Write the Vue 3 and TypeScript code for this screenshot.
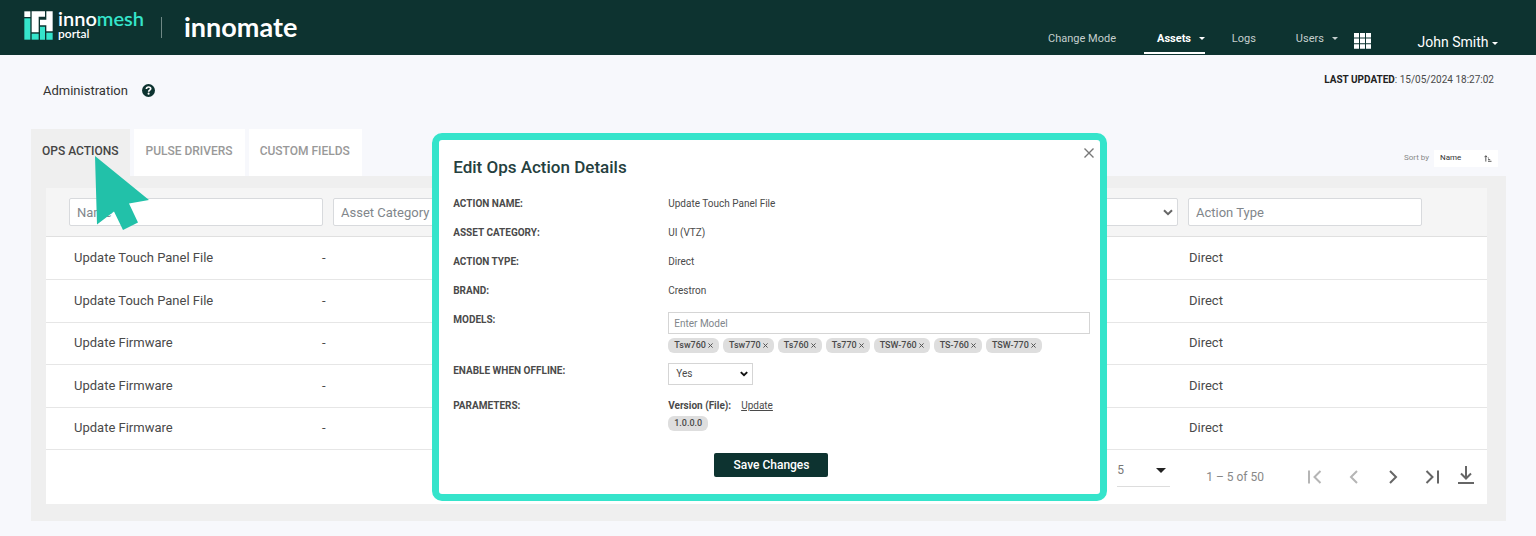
<script setup lang="ts">
import { ref } from 'vue'

interface ActionRow {
  name: string
  category: string
  type: string
}

const rows: ActionRow[] = [
  { name: 'Update Touch Panel File', category: '-', type: 'Direct' },
  { name: 'Update Touch Panel File', category: '-', type: 'Direct' },
  { name: 'Update Firmware', category: '-', type: 'Direct' },
  { name: 'Update Firmware', category: '-', type: 'Direct' },
  { name: 'Update Firmware', category: '-', type: 'Direct' },
]

const tabs = ['OPS ACTIONS', 'PULSE DRIVERS', 'CUSTOM FIELDS']
const activeTab = ref('OPS ACTIONS')

const details = [
  { label: 'ACTION NAME:', value: 'Update Touch Panel File' },
  { label: 'ASSET CATEGORY:', value: 'UI (VTZ)' },
  { label: 'ACTION TYPE:', value: 'Direct' },
  { label: 'BRAND:', value: 'Crestron' },
]

const models = ref(['Tsw760', 'Tsw770', 'Ts760', 'Ts770', 'TSW-760', 'TS-760', 'TSW-770'])
const offline = ref('Yes')
const dialogOpen = ref(true)

function removeModel(model: string) {
  models.value = models.value.filter((m) => m !== model)
}
</script>

<template>
  <div class="page">
    <header class="topbar">
      <a class="brand" href="#">
        <svg class="brand-mark" viewBox="0 0 87 87" aria-hidden="true">
          <g fill="#fff">
            <path d="M1 1h18v17H1z" />
            <path d="M23 1h40v16H44v47H23z" />
            <path d="M67 1h19v60H67V43H48V26h19z" />
          </g>
          <g fill="#35e4cb">
            <path d="M1 22h18v64H1z" />
            <path d="M23 68h21v18H23z" />
            <path d="M48 47h15v39H48zM67 65h19v21H67z" />
          </g>
        </svg>
        <span class="brand-text">
          <span class="brand-name">inno<span class="accent">mesh</span></span>
          <span class="brand-sub">portal</span>
        </span>
      </a>
      <span class="divider"></span>
      <span class="product">innomate</span>
      <nav class="nav">
        <a class="nav-mode" href="#">Change Mode</a>
        <a class="nav-assets active" href="#">Assets <i class="caret"></i></a>
        <a class="nav-logs" href="#">Logs</a>
        <a class="nav-users" href="#">Users <i class="caret"></i></a>
        <button class="apps" type="button" aria-label="Apps">
          <svg viewBox="0 0 17 16" width="17" height="16" fill="#fff" aria-hidden="true">
            <path d="M0 0h5v4.600H0zM6 0h5v4.600H6zM12 0h5v4.600h-5zM0 5.600h5v4.600H0zM6 5.600h5v4.600H6zM12 5.600h5v4.600h-5zM0 11.200h5v4.600H0zM6 11.200h5v4.600H6zM12 11.200h5v4.600h-5z" />
          </svg>
        </button>
        <button class="user" type="button">John Smith <i class="caret"></i></button>
      </nav>
    </header>

    <main class="content">
      <div class="heading">
        <h1>Administration</h1>
        <button class="help" type="button" aria-label="Help">
          <svg viewBox="0 0 16 16" width="13" height="13" aria-hidden="true">
            <circle cx="8" cy="8" r="8" fill="#0d3330" />
            <path d="M5.400 6.200c.1-1.600 1.200-2.500 2.700-2.500 1.500 0 2.600.9 2.600 2.200 0 1.700-2.500 1.700-2.500 3.500" fill="none" stroke="#fff" stroke-width="2.100" />
            <circle cx="8.100" cy="11.900" r="1.300" fill="#fff" />
          </svg>
        </button>
        <p class="updated"><strong>LAST UPDATED</strong>: 15/05/2024 18:27:02</p>
      </div>

      <div class="toolbar">
        <div class="tabs" role="tablist">
          <button
            v-for="tab in tabs"
            :key="tab"
            type="button"
            role="tab"
            class="tab"
            :class="{ selected: tab === activeTab }"
            :aria-selected="tab === activeTab"
            @click="activeTab = tab"
          >{{ tab }}</button>
        </div>
        <div class="sort">
          <label for="sort">Sort by</label>
          <div class="sort-box">
            <select id="sort"><option>Name</option></select>
            <svg viewBox="0 0 9 8" width="8" height="7" fill="none" stroke="#444" stroke-width="1" aria-hidden="true">
              <path d="M2 7.500V1M.5 2.500 2 .8l1.500 1.700M4.500 3.500h1M4.500 5.300h2.500M4.500 7.200h4" />
            </svg>
          </div>
        </div>
        <svg class="pointer" viewBox="0 0 54 74" width="54" height="74" aria-hidden="true">
          <path d="M0 0 54 44 34 47.500 43 66.500 28 74 19 55.500 2 68.500z" fill="#22c1a9" />
        </svg>
      </div>

      <section class="panel">
        <div class="card">
          <form class="filters" @submit.prevent>
            <input class="f-name" placeholder="Name" aria-label="Name" />
            <input class="f-wide" placeholder="Asset Category" aria-label="Asset Category" />
            <div class="f-wide f-select">
              <select aria-label="Brand"><option></option></select>
              <svg viewBox="0 0 10 7" width="10" height="7" aria-hidden="true">
                <path d="M1 1.200 5 5.200 9 1.200" fill="none" stroke="#666" stroke-width="2" />
              </svg>
            </div>
            <input class="f-type" placeholder="Action Type" aria-label="Action Type" />
          </form>
          <table class="grid">
            <colgroup>
              <col class="c-name" />
              <col />
              <col class="c-type" />
            </colgroup>
            <tbody>
              <tr v-for="(row, i) in rows" :key="i">
                <td>{{ row.name }}</td>
                <td>{{ row.category }}</td>
                <td>{{ row.type }}</td>
              </tr>
            </tbody>
          </table>
          <div class="pager">
            <div class="page-size">
              <select aria-label="Rows"><option>5</option></select>
              <i class="caret"></i>
            </div>
            <span class="range">1 – 5 of 50</span>
            <button class="off" type="button" aria-label="First page" disabled>
              <svg viewBox="0 0 16 16" width="16" height="16"><path d="M2 1.500v13M13.500 2 7.500 8l6 6" /></svg>
            </button>
            <button class="off" type="button" aria-label="Previous page" disabled>
              <svg viewBox="0 0 16 16" width="16" height="16"><path d="M11 2 5 8l6 6" /></svg>
            </button>
            <button type="button" aria-label="Next page">
              <svg viewBox="0 0 16 16" width="16" height="16"><path d="M5 2l6 6-6 6" /></svg>
            </button>
            <button type="button" aria-label="Last page">
              <svg viewBox="0 0 16 16" width="16" height="16"><path d="M2.500 2l6 6-6 6M14 1.500v13" /></svg>
            </button>
            <button class="download" type="button" aria-label="Download">
              <svg viewBox="0 0 16 20" width="16" height="20"><path d="M8 1v12M3 8.500l5 5 5-5M0 18h16" /></svg>
            </button>
          </div>
        </div>
      </section>
    </main>

    <div v-if="dialogOpen" class="overlay">
      <section class="dialog" role="dialog" aria-labelledby="dialog-title">
        <div class="dialog-head">
          <h2 id="dialog-title">Edit Ops Action Details</h2>
          <button class="close" type="button" aria-label="Close" @click="dialogOpen = false">
            <svg viewBox="0 0 10 10" width="10" height="10"><path d="M.5.5l9 9M9.500.5l-9 9" fill="none" stroke="#777" stroke-width="1.400" /></svg>
          </button>
        </div>
        <form @submit.prevent>
          <div v-for="d in details" :key="d.label" class="line">
            <span class="label">{{ d.label }}</span>
            <span class="value">{{ d.value }}</span>
          </div>
          <div class="line models">
            <label class="label" for="model">MODELS:</label>
            <div class="value">
              <input id="model" class="model-input" placeholder="Enter Model" />
              <div class="chips">
                <span v-for="m in models" :key="m" class="chip">
                  {{ m }}
                  <button type="button" :aria-label="'Remove ' + m" @click="removeModel(m)">
                    <svg viewBox="0 0 6 6" width="5" height="5"><path d="M.5.5l5 5M5.500.5l-5 5" fill="none" stroke="#555" stroke-width="1.200" /></svg>
                  </button>
                </span>
              </div>
            </div>
          </div>
          <div class="line offline">
            <label class="label" for="offline">ENABLE WHEN OFFLINE:</label>
            <div class="value">
              <div class="yes-box">
                <select id="offline" v-model="offline"><option>Yes</option><option>No</option></select>
                <svg viewBox="0 0 10 7" width="8" height="6" aria-hidden="true">
                  <path d="M1 1.200 5 5 9 1.200" fill="none" stroke="#111" stroke-width="2.400" />
                </svg>
              </div>
            </div>
          </div>
          <div class="line params">
            <span class="label">PARAMETERS:</span>
            <div class="value">
              <div><strong>Version (File):</strong><a href="#">Update</a></div>
              <span class="chip">1.0.0.0</span>
            </div>
          </div>
          <div class="actions">
            <button class="save" type="submit">Save Changes</button>
          </div>
        </form>
      </section>
    </div>
  </div>
</template>

<style>
body {
  margin: 0;
  background: #f7f8fc;
}
</style>

<style scoped>
.page {
  position: relative;
  min-height: 100vh;
  background: #f7f8fc;
  color: #4a4a4a;
  font: 13px/16px Roboto, "Liberation Sans", sans-serif;
}
.page *,
.page *::before {
  box-sizing: border-box;
}
button,
input,
select {
  font: inherit;
  color: inherit;
  margin: 0;
}
button {
  border: 0;
  padding: 0;
  background: none;
  cursor: pointer;
}
select {
  appearance: none;
  border: 0;
  background: none;
  border-radius: 0;
  outline: 0;
}
svg {
  display: block;
}
.caret {
  display: inline-block;
  border: 3px solid transparent;
  border-top-color: currentColor;
  border-bottom: 0;
}

/* Top bar */
.topbar {
  display: flex;
  align-items: center;
  height: 55px;
  padding: 0 38px 0 24px;
  background: #0d3330;
  color: #fff;
}
.brand {
  display: flex;
  align-items: center;
  gap: 5px;
  padding-bottom: 4px;
  color: #fff;
  text-decoration: none;
}
.brand-mark {
  width: 29px;
  height: 29px;
}
.brand-text {
  display: flex;
  flex-direction: column;
  padding-bottom: 3px;
  font-family: Lato, sans-serif;
  font-weight: 600;
}
.brand-name {
  font-size: 20px;
  line-height: 20px;
}
.accent {
  color: #35e4cb;
}
.brand-sub {
  font-size: 12px;
  line-height: 12px;
}
.divider {
  width: 1px;
  height: 21px;
  margin: 0 22px 0 17px;
  background: #6f8885;
}
.product {
  padding-bottom: 2px;
  font: 700 27px/30px Lato, sans-serif;
}
.nav {
  display: flex;
  align-items: flex-end;
  height: 55px;
  margin-left: auto;
  font-size: 11px;
}
.nav a {
  height: 31px;
  line-height: 32px;
  margin-bottom: 1px;
  color: #c5cfce;
  text-decoration: none;
  white-space: nowrap;
}
.nav .caret {
  margin-left: 5px;
  vertical-align: 2px;
}
.nav .nav-assets {
  margin: 0 27px 1px 28px;
  padding-left: 13px;
  border-bottom: 2px solid #fff;
  color: #fff;
  font-weight: 700;
}
.nav .nav-users {
  margin-left: 40px;
}
.apps {
  height: 16px;
  margin: 0 0 6px 16px;
}
.user {
  height: 26px;
  margin-left: 47px;
  font-size: 14px;
  white-space: nowrap;
}
.nav .user .caret {
  margin-left: 0;
}

/* Page heading */
.content {
  padding: 0 30px 15px 31px;
}
.heading {
  display: flex;
  align-items: center;
  height: 74px;
  padding: 0 12px 3px;
}
h1 {
  margin: 0;
  font-size: 13px;
  font-weight: 400;
  color: #333;
}
.help {
  margin-left: 14px;
}
.updated {
  margin: 0 0 22px auto;
  font-size: 10px;
}
.updated strong {
  font-weight: 700;
  color: #222;
}

/* Tabs and sort */
.toolbar {
  position: relative;
  display: flex;
  justify-content: space-between;
}
.tabs {
  display: flex;
  gap: 4px;
}
.tab {
  height: 47px;
  padding: 0 12px 3px 11px;
  background: #fff;
  color: #999;
  font-size: 12px;
  font-weight: 500;
}
.tab.selected {
  background: #efefef;
  color: #444;
}
.sort {
  display: flex;
  align-items: center;
  gap: 5px;
  padding: 11px 8px 0 0;
  font-size: 8px;
  color: #888;
}
.sort-box {
  display: flex;
  align-items: center;
  width: 64px;
  height: 17px;
  padding: 0 6px;
  background: #fff;
  color: #333;
}
.sort-box select {
  flex: 1;
  min-width: 0;
  padding: 0;
}
.pointer {
  position: absolute;
  left: 64px;
  top: 27px;
  z-index: 2;
}

/* Table panel */
.panel {
  padding: 12px 19px 17px 15px;
  background: #efefef;
}
.card {
  background: #fff;
}
.filters {
  display: flex;
  gap: 10px;
  height: 49px;
  padding: 10px 65px 0 23px;
  background: #f5f5f5;
  border-bottom: 1px solid #e0e0e0;
}
.filters input,
.f-select {
  min-width: 0;
  height: 28px;
  padding: 0 7px;
  border: 1px solid #d8dadd;
  border-radius: 2px;
  background: #fff;
}
input::placeholder {
  color: #81868b;
  opacity: 1;
}
.f-name {
  width: 254px;
}
.f-wide {
  flex: 1;
}
.f-type {
  width: 234px;
}
.f-select {
  display: flex;
  align-items: center;
  padding: 0 4px;
}
.f-select select {
  flex: 1;
}
.grid {
  width: 100%;
  table-layout: fixed;
  border-collapse: collapse;
}
.c-name {
  width: 276px;
}
.c-type {
  width: 298px;
}
.grid td {
  height: 42px;
  padding: 0;
  border-bottom: 1px solid #e6e6e6;
}
.grid tr:nth-child(even) td {
  height: 43px;
}
.grid td:first-child {
  padding-left: 28px;
}
.pager {
  display: flex;
  align-items: center;
  justify-content: flex-end;
  height: 54px;
  padding: 0 13px 0 0;
  color: #777;
}
.page-size {
  display: flex;
  align-items: center;
  width: 53px;
  height: 32px;
  margin: 0 36px 12px 0;
  padding: 0 4px 0 0;
  border-bottom: 1px solid #ddd;
  font-size: 12px;
}
.page-size select {
  flex: 1;
  min-width: 0;
  padding: 0;
}
.page-size .caret {
  border-width: 5px 5px 0;
  color: #222;
}
.range {
  margin-right: 43px;
  font-size: 12px;
  color: #888;
}
.pager button {
  margin-right: 23px;
}
.pager button.download {
  margin: 0 0 4px -5px;
}
.pager svg {
  fill: none;
  stroke: #666;
  stroke-width: 2;
}
.pager .off svg {
  stroke: #b5b5b5;
}

/* Dialog */
.overlay {
  position: absolute;
  inset: 0;
  z-index: 3;
  display: flex;
  justify-content: center;
  align-items: flex-start;
  padding: 133px 0 0 3px;
}
.dialog {
  width: 44%;
  min-width: 640px;
  padding: 8px 10px 17px 14px;
  border: 7px solid #35e4cb;
  border-radius: 10px;
  background: #fff;
}
.dialog-head {
  display: flex;
  justify-content: space-between;
  align-items: flex-start;
  height: 46px;
}
h2 {
  margin: 0;
  padding-top: 8px;
  font-size: 17px;
  line-height: 22px;
  font-weight: 500;
  color: #25403e;
}
.close {
  margin-right: -4px;
}
.line {
  display: flex;
  min-height: 29px;
  font-size: 10px;
  line-height: 20px;
}
.label {
  width: 215px;
  font-weight: 700;
}
.value {
  flex: 1;
}
.models .value {
  padding-top: 2px;
}
.model-input {
  display: block;
  width: 100%;
  height: 22px;
  padding: 0 5px;
  border: 1px solid #d5d5d5;
}
.chips {
  display: flex;
  gap: 4px;
  padding-top: 4px;
}
.chip {
  display: inline-flex;
  align-items: center;
  gap: 2px;
  height: 15px;
  padding: 0 6px;
  border-radius: 6px;
  background: #dedede;
  font-size: 9px;
  line-height: 15px;
  font-weight: 500;
}
.models {
  min-height: 51px;
}
.offline {
  min-height: 35px;
}
.yes-box {
  display: flex;
  align-items: center;
  width: 85px;
  height: 22px;
  margin-top: 2px;
  padding: 0 4px 0 7px;
  border: 1px solid #d5d5d5;
}
.yes-box select {
  flex: 1;
  padding: 0;
}
.params {
  min-height: 57px;
}
.params strong {
  font-weight: 700;
}
.params a {
  margin-left: 10px;
  color: inherit;
}
.params .chip {
  display: flex;
  width: max-content;
}
.actions {
  display: flex;
  justify-content: center;
}
.save {
  width: 114px;
  height: 24px;
  border-radius: 2px;
  background: #0d3330;
  color: #fff;
  font-size: 12px;
  font-weight: 500;
}
</style>
